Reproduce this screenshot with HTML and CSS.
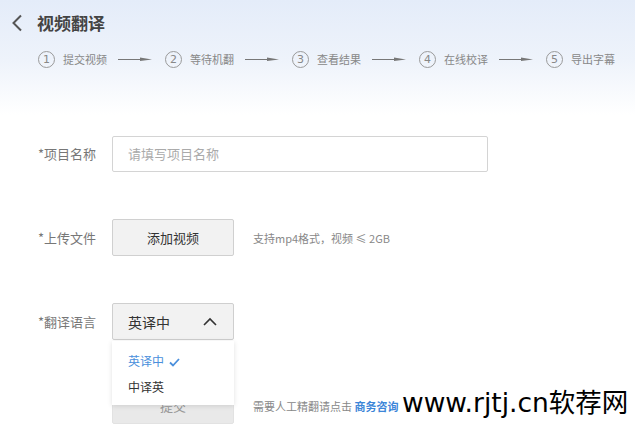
FILE: index.html
```html
<!DOCTYPE html>
<html lang="zh">
<head>
<meta charset="utf-8">
<link rel="stylesheet" href="styles.css">
</head>
<body>
<div class="page">
  <header class="header">
    <div class="title-row">
      <svg class="back" width="12" height="18" viewBox="0 0 12 18"><path d="M10 1.5 L2.5 9 L10 16.5" fill="none" stroke="#555" stroke-width="2"/></svg>
      <h1 class="title">视频翻译</h1>
    </div>
    <ol class="steps">
      <li class="step"><span class="num">1</span><span class="step-text">提交视频</span></li>
      <li class="arrow"><svg width="34" height="6" viewBox="0 0 34 6"><path d="M0 3.5 H24" stroke="#777" stroke-width="1"/><path d="M22 1.5 L34 3.5 L22 5 Z" fill="#777"/></svg></li>
      <li class="step"><span class="num">2</span><span class="step-text">等待机翻</span></li>
      <li class="arrow"><svg width="34" height="6" viewBox="0 0 34 6"><path d="M0 3.5 H24" stroke="#777" stroke-width="1"/><path d="M22 1.5 L34 3.5 L22 5 Z" fill="#777"/></svg></li>
      <li class="step"><span class="num">3</span><span class="step-text">查看结果</span></li>
      <li class="arrow"><svg width="34" height="6" viewBox="0 0 34 6"><path d="M0 3.5 H24" stroke="#777" stroke-width="1"/><path d="M22 1.5 L34 3.5 L22 5 Z" fill="#777"/></svg></li>
      <li class="step"><span class="num">4</span><span class="step-text">在线校译</span></li>
      <li class="arrow"><svg width="34" height="6" viewBox="0 0 34 6"><path d="M0 3.5 H24" stroke="#777" stroke-width="1"/><path d="M22 1.5 L34 3.5 L22 5 Z" fill="#777"/></svg></li>
      <li class="step"><span class="num">5</span><span class="step-text">导出字幕</span></li>
    </ol>
  </header>

  <form class="form">
    <div class="row">
      <label class="label">*项目名称</label>
      <input class="input" type="text" placeholder="请填写项目名称">
    </div>
    <div class="row">
      <label class="label">*上传文件</label>
      <button type="button" class="btn">添加视频</button>
      <span class="hint">支持mp4格式，视频 ≤ 2GB</span>
    </div>
    <div class="row">
      <label class="label">*翻译语言</label>
      <div class="select-wrap">
        <div class="select">
          <span>英译中</span>
          <svg width="14" height="9" viewBox="0 0 14 9"><path d="M1 8 L7 2 L13 8" fill="none" stroke="#333" stroke-width="1.6"/></svg>
        </div>
        <ul class="dropdown">
          <li class="opt active">英译中 <svg class="check" width="11" height="9" viewBox="0 0 11 9"><path d="M1 4.5 L4 7.5 L10 1" fill="none" stroke="#4a8fdc" stroke-width="1.8"/></svg></li>
          <li class="opt">中译英</li>
        </ul>
      </div>
    </div>
    <div class="row">
      <span class="label"></span>
      <button type="button" class="btn submit">提交</button>
      <span class="hint">需要人工精翻请点击 <a class="link">商务咨询</a></span>
    </div>
  </form>

  <div class="watermark">www.rjtj.cn软荐网</div>
</div>
</body>
</html>
```

FILE: styles.css
```css
* { box-sizing: border-box; }
html, body { margin: 0; padding: 0; }
body {
  font-family: "Noto Sans CJK SC", "Noto Sans", sans-serif;
  color: #333;
  background: linear-gradient(#e4ecf9 0px, #eef3fb 60px, #ffffff 115px);
  width: 635px;
  height: 443px;
  overflow: hidden;
}
.page { position: relative; height: 443px; }

.header { padding: 12px 0 0 0; }
.title-row {
  display: flex;
  align-items: center;
  height: 22px;
  padding-left: 11px;
}
.back { margin-right: 14px; }
.title {
  margin: 0;
  font-size: 17px;
  font-weight: bold;
  color: #444;
  line-height: 22px;
}

.steps {
  list-style: none;
  margin: 16px 0 0 0;
  padding: 0 0 0 38px;
  display: flex;
  align-items: center;
  height: 18px;
}
.step { display: flex; align-items: center; }
.num {
  width: 17px; height: 17px;
  border: 1px solid #9a9a9a;
  border-radius: 50%;
  font-size: 11px;
  line-height: 15px;
  text-align: center;
  color: #888;
  font-family: "DejaVu Sans", sans-serif;
}
.step-text {
  margin-left: 8px;
  font-size: 11px;
  color: #888;
}
.arrow { display: flex; margin: 0 13px 0 11px; }

.form { padding: 67px 0 0 38px; }
.row {
  display: flex;
  align-items: center;
  height: 37px;
  margin-bottom: 47px;
}
.label {
  width: 74px;
  flex: none;
  font-size: 13px;
  color: #777;
}
.input {
  width: 376px;
  height: 36px;
  border: 1px solid #d4d4d4;
  border-radius: 2px;
  padding: 0 15px;
  font-size: 13px;
  font-family: inherit;
  color: #333;
  background: #fff;
  outline: none;
}
.input::placeholder { color: #aaa; }
.btn {
  width: 122px;
  height: 37px;
  border: 1px solid #d0d0d0;
  border-radius: 2px;
  background: #f2f2f2;
  font-family: inherit;
  font-size: 13px;
  color: #333;
  padding: 0;
}
.submit { background: #e9e9e9; border-color: #e2e2e2; color: #999; }
.hint {
  margin-left: 19px;
  font-size: 11px;
  color: #888;
}
.link { color: #3d86d8; font-weight: bold; }

.select-wrap { position: relative; width: 122px; }
.select {
  height: 37px;
  border: 1px solid #cfcfcf;
  border-radius: 2px;
  background: #f2f2f2;
  display: flex;
  align-items: center;
  justify-content: space-between;
  padding: 0 16px 0 15px;
  font-size: 14px;
  color: #333;
}
.dropdown {
  position: absolute;
  top: 38px;
  left: 0;
  width: 122px;
  margin: 0;
  padding: 7px 0 5px 0;
  list-style: none;
  background: #fff;
  box-shadow: 0 1px 5px rgba(0,0,0,0.12);
  z-index: 2;
}
.opt {
  height: 26px;
  line-height: 26px;
  padding-left: 16px;
  font-size: 12px;
  color: #333;
}
.opt.active { color: #4a8fdc; }
.check { margin-left: 2px; vertical-align: -1px; }

.watermark {
  position: absolute;
  left: 402px;
  top: 383px;
  font-family: "DejaVu Sans", "Noto Sans CJK SC", sans-serif;
  font-size: 26.5px;
  color: #000;
  line-height: 40px;
  white-space: nowrap;
}
```
